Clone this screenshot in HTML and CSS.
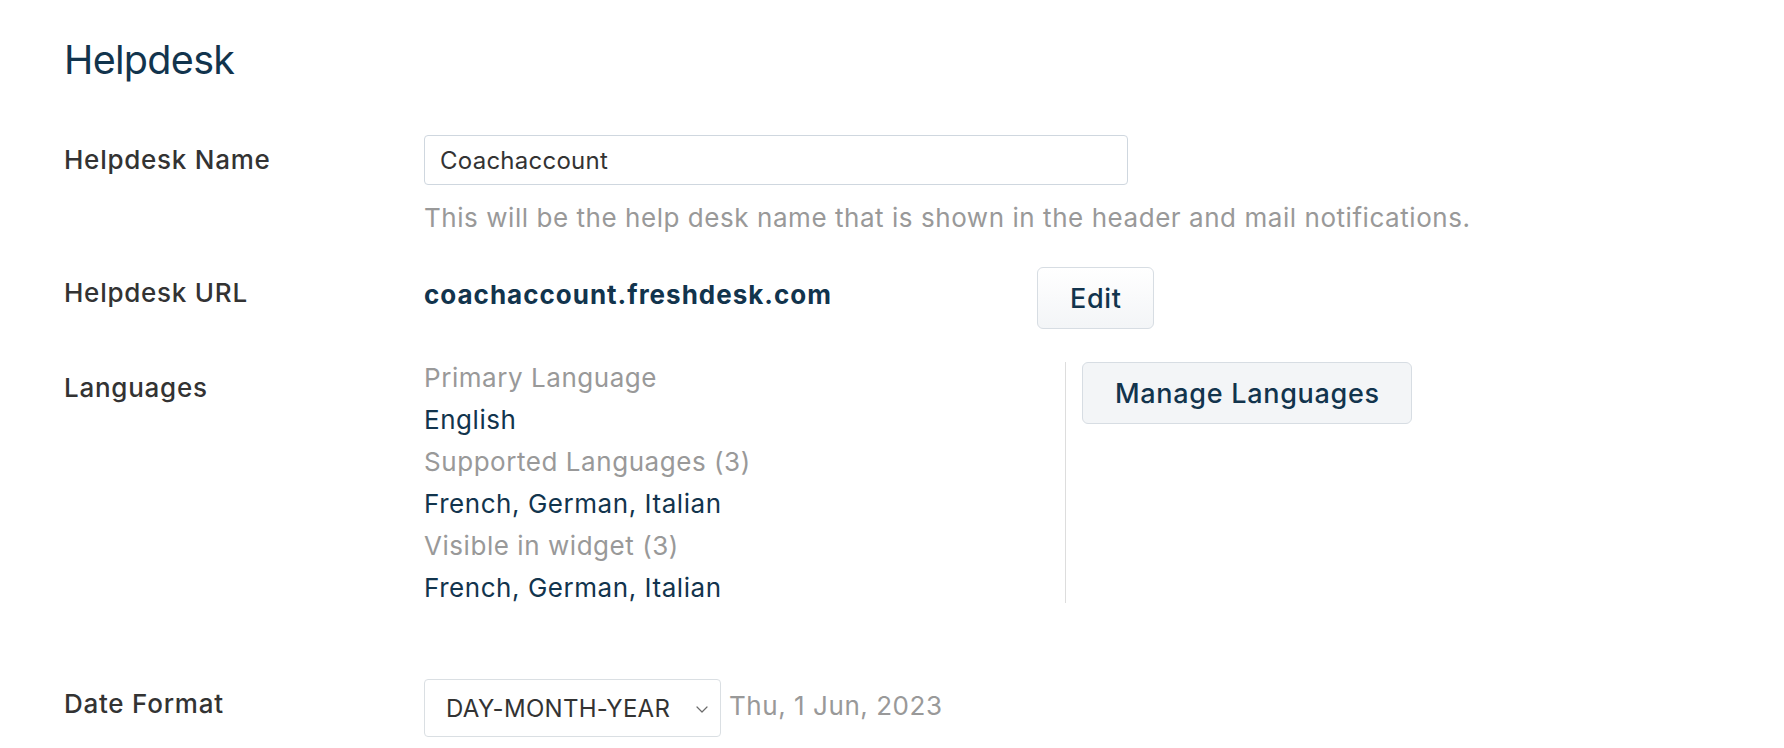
FILE: index.html
```html
<!DOCTYPE html>
<html lang="en">
<head>
<meta charset="utf-8">
<title>Helpdesk</title>
<link rel="stylesheet" href="styles.css">
</head>
<body>
<main class="page">
  <h1 class="title">Helpdesk</h1>

  <div class="row row-name">
    <label class="label" for="hd-name">Helpdesk Name</label>
    <div class="value">
      <input id="hd-name" class="text-input" type="text" value="Coachaccount">
      <p class="hint">This will be the help desk name that is shown in the header and mail notifications.</p>
    </div>
  </div>

  <div class="row row-url">
    <div class="label">Helpdesk URL</div>
    <div class="value url-value">
      <span class="url">coachaccount.freshdesk.com</span>
      <button class="btn btn-edit" type="button">Edit</button>
    </div>
  </div>

  <div class="row row-lang">
    <div class="label">Languages</div>
    <div class="value lang-value">
      <div class="lang-list">
        <div class="muted">Primary Language</div>
        <div class="strong">English</div>
        <div class="muted">Supported Languages (3)</div>
        <div class="strong">French, German, Italian</div>
        <div class="muted">Visible in widget (3)</div>
        <div class="strong">French, German, Italian</div>
      </div>
      <div class="lang-actions">
        <button class="btn btn-manage" type="button">Manage Languages</button>
      </div>
    </div>
  </div>

  <div class="row row-date">
    <label class="label" for="date-format">Date Format</label>
    <div class="value date-value">
      <div class="select-wrap">
        <select id="date-format" class="select">
          <option>DAY-MONTH-YEAR</option>
        </select>
        <svg class="chevron" width="12" height="7" viewBox="0 0 12 7" aria-hidden="true"><path d="M1 1l5 5 5-5" fill="none" stroke="#6b6b6b" stroke-width="1.2" stroke-linecap="round" stroke-linejoin="round"/></svg>
      </div>
      <span class="date-example">Thu, 1 Jun, 2023</span>
    </div>
  </div>
</main>
</body>
</html>
```
FILE: styles.css
```css
* { box-sizing: border-box; }

html, body {
  margin: 0;
  background: #ffffff;
}

body {
  font-family: "Inter", "Helvetica Neue", Arial, sans-serif;
  font-size: 26px;
  letter-spacing: 0.55px;
  color: #333333;
}

.page {
  padding: 36px 64px 0 64px;
}

.title {
  margin: 0;
  font-size: 39.5px;
  line-height: 48px;
  font-weight: 400;
  letter-spacing: -0.7px;
  color: #12344d;
}

.row {
  display: flex;
  align-items: flex-start;
}

.label {
  flex: 0 0 360px;
  font-weight: 500;
  letter-spacing: 0.75px;
  line-height: 42px;
  color: #333333;
}

.value {
  flex: 1 1 auto;
  min-width: 0;
}

/* Helpdesk Name */
.row-name {
  margin-top: 51px;
}

.row-name .label {
  line-height: 50px;
}

.text-input {
  display: block;
  width: 704px;
  height: 50px;
  margin: 0;
  padding: 0 15px;
  border: 1px solid #cfd7df;
  border-radius: 4px;
  font-family: inherit;
  font-size: 24px;
  letter-spacing: 0.25px;
  color: #333333;
  background: #ffffff;
  outline: none;
}

.hint {
  margin: 12px 0 0 0;
  line-height: 42px;
  color: #999999;
}

/* Helpdesk URL */
.row-url {
  margin-top: 28px;
}

.row-url .label {
  padding-top: 5px;
}

.url-value {
  display: flex;
  align-items: flex-start;
}

.url {
  flex: 0 0 613px;
  padding-top: 7px;
  line-height: 42px;
  font-weight: 700;
  letter-spacing: 1px;
  color: #12344d;
}

.btn {
  display: inline-flex;
  align-items: center;
  justify-content: center;
  height: 62px;
  margin: 0;
  padding: 0 31px 0 32px;
  border: 1px solid #d7dde3;
  border-radius: 6px;
  background: #f3f5f7;
  font-family: inherit;
  font-size: 27px;
  font-weight: 500;
  letter-spacing: 0.7px;
  color: #12344d;
  cursor: pointer;
}

.btn-edit {
  background: linear-gradient(#ffffff, #f3f5f7);
}

/* Languages */
.row-lang {
  margin-top: 28px;
}

.row-lang .label {
  padding-top: 10px;
}

.lang-value {
  display: flex;
  align-items: stretch;
}

.lang-list {
  flex: 0 0 641px;
  line-height: 42px;
}

.muted {
  color: #999999;
}

.strong {
  color: #12344d;
}

.lang-actions {
  margin: 5px 0 6px 0;
  padding-left: 16px;
  border-left: 1px solid #dddddd;
}

/* Date Format */
.row-date {
  margin-top: 70px;
}

.row-date .label {
  padding-top: 4px;
}

.date-value {
  display: flex;
  align-items: center;
}

.select-wrap {
  position: relative;
  width: 297px;
  height: 58px;
}

.select {
  width: 100%;
  height: 100%;
  margin: 0;
  padding: 0 40px 0 21px;
  border: 1px solid #dadfe3;
  border-radius: 4px;
  background: #ffffff;
  font-family: inherit;
  font-size: 24px;
  letter-spacing: 0.3px;
  color: #333333;
  appearance: none;
  -webkit-appearance: none;
  outline: none;
}

.chevron {
  position: absolute;
  right: 13px;
  top: 27px;
  pointer-events: none;
}

.date-example {
  margin-left: 8px;
  padding-bottom: 4px;
  line-height: 42px;
  color: #999999;
}
```
